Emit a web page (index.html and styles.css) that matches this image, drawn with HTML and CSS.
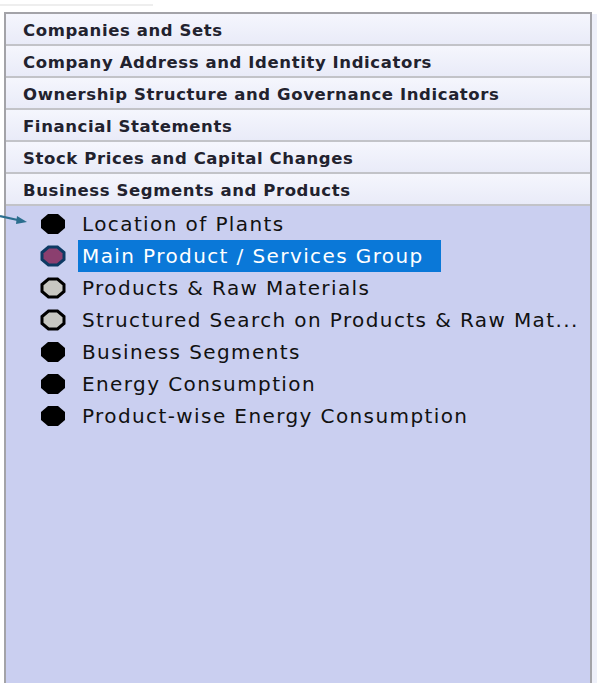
FILE: index.html
```html
<!DOCTYPE html>
<html>
<head>
<meta charset="utf-8">
<link rel="stylesheet" href="styles.css">
</head>
<body>
<div class="topline"></div>
<div class="frame">
  <div class="panel">
    <div class="hdr">Companies and Sets</div>
    <div class="hdr">Company Address and Identity Indicators</div>
    <div class="hdr">Ownership Structure and Governance Indicators</div>
    <div class="hdr">Financial Statements</div>
    <div class="hdr">Stock Prices and Capital Changes</div>
    <div class="hdr">Business Segments and Products</div>
    <div class="list">
      <div class="item"><svg class="oct" viewBox="0 0 26 22"><polygon class="solid" points="8,1 18,1 25,7 25,15 18,21 8,21 1,15 1,7"/></svg><span class="label">Location of Plants</span></div>
      <div class="item"><svg class="oct" viewBox="0 0 26 22"><polygon class="sel" points="8.5,2 17.5,2 24,7.5 24,14.5 17.5,20 8.5,20 2,14.5 2,7.5"/></svg><span class="label selected">Main Product / Services Group</span></div>
      <div class="item"><svg class="oct" viewBox="0 0 26 22"><polygon class="open" points="8.5,2 17.5,2 24,7.5 24,14.5 17.5,20 8.5,20 2,14.5 2,7.5"/></svg><span class="label">Products &amp; Raw Materials</span></div>
      <div class="item"><svg class="oct" viewBox="0 0 26 22"><polygon class="open" points="8.5,2 17.5,2 24,7.5 24,14.5 17.5,20 8.5,20 2,14.5 2,7.5"/></svg><span class="label">Structured Search on Products &amp; Raw Mat...</span></div>
      <div class="item"><svg class="oct" viewBox="0 0 26 22"><polygon class="solid" points="8,1 18,1 25,7 25,15 18,21 8,21 1,15 1,7"/></svg><span class="label">Business Segments</span></div>
      <div class="item"><svg class="oct" viewBox="0 0 26 22"><polygon class="solid" points="8,1 18,1 25,7 25,15 18,21 8,21 1,15 1,7"/></svg><span class="label">Energy Consumption</span></div>
      <div class="item"><svg class="oct" viewBox="0 0 26 22"><polygon class="solid" points="8,1 18,1 25,7 25,15 18,21 8,21 1,15 1,7"/></svg><span class="label">Product-wise Energy Consumption</span></div>
    </div>
  </div>
  <div class="edge"></div>
</div>
<svg class="pointer" width="30" height="14" viewBox="0 0 30 14">
  <line x1="0" y1="3" x2="20" y2="7.5" stroke="#2b6e8e" stroke-width="2.2"/>
  <polygon points="27,9 17,3 16,11" fill="#2b6e8e"/>
</svg>
</body>
</html>
```
FILE: styles.css
```css
html, body {
  margin: 0;
  padding: 0;
  background: #ffffff;
}
body {
  width: 597px;
  height: 688px;
  overflow: hidden;
  position: relative;
}
.topline {
  width: 153px;
  height: 2px;
  margin-top: 4px;
  background: #eeeeee;
}
.frame {
  display: flex;
  margin-top: 6px;
  margin-left: 4px;
  height: 671px;
}
.panel {
  width: 584px;
  border: 2px solid #a3a3a8;
  border-bottom: none;
  background: #cacff0;
  display: flex;
  flex-direction: column;
}
.edge {
  width: 5px;
  margin-top: 2px;
  background: #eef0fa;
}
.hdr {
  height: 32px;
  box-sizing: border-box;
  padding-top: 2px;
  border-bottom: 2px solid #c2c3c8;
  background: linear-gradient(#f5f6fd, #e9ebf8);
  padding-left: 17px;
  display: flex;
  align-items: center;
  font-family: "DejaVu Sans", "Liberation Sans", sans-serif;
  font-weight: 700;
  font-size: 16.5px;
  letter-spacing: 0.6px;
  color: #22222e;
}
.hdr:last-of-type {
  border-bottom-color: #a9aab4;
}
.list {
  padding-top: 2px;
  display: flex;
  flex-direction: column;
}
.item {
  height: 32px;
  display: flex;
  align-items: center;
  padding-left: 34px;
}
.oct {
  width: 26px;
  height: 22px;
  flex: none;
}
.solid {
  fill: #000000;
}
.sel {
  fill: #8b3f6f;
  stroke: #0d3a63;
  stroke-width: 3;
}
.open {
  fill: #c7c7c2;
  stroke: #000000;
  stroke-width: 3;
}
.label {
  margin-left: 12px;
  padding: 0 4px;
  height: 32px;
  line-height: 32px;
  font-family: "DejaVu Sans", "Liberation Sans", sans-serif;
  font-size: 20px;
  letter-spacing: 1.4px;
  color: #111111;
  white-space: nowrap;
}
.selected {
  padding-right: 17px;
  background: #0a78d8;
  color: #ffffff;
}
.pointer {
  position: absolute;
  left: 0;
  top: 213px;
}
```
